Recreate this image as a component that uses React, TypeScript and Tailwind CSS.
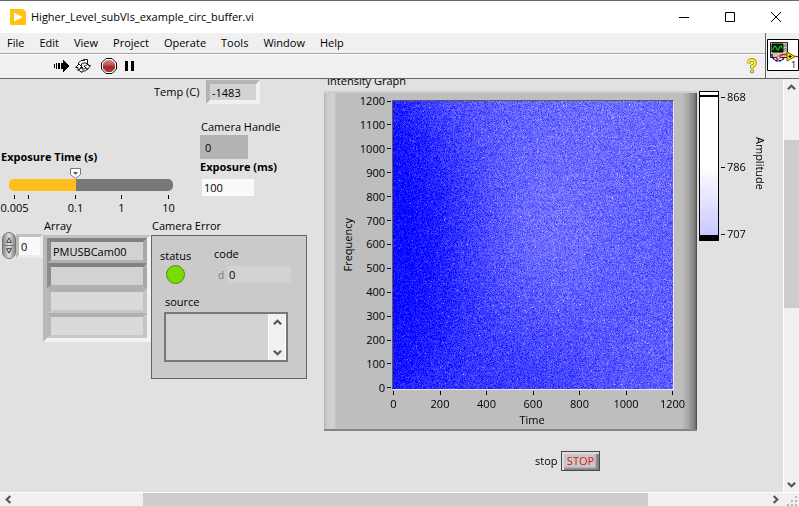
import { useEffect, useRef, useState } from "react";
import type { ReactNode } from "react";

const MENUS = ["File", "Edit", "View", "Project", "Operate", "Tools", "Window", "Help"];
const Y_TICKS = [1200, 1100, 1000, 900, 800, 700, 600, 500, 400, 300, 200, 100, 0];
const X_TICKS = [0, 200, 400, 600, 800, 1000, 1200];
const PLOT_W = 280;
const PLOT_H = 288;

// Mean brightness of the camera frame at a normalised position.
function level(u: number, v: number) {
  const edge = 0.06 + 0.18 * Math.sin(Math.PI * Math.pow(v, 0.9));
  const ramp = 1 / (1 + Math.exp(-(u - edge) * 9));
  const glow = Math.exp(-((u - 0.52) ** 2 / 0.06 + (v - 0.46) ** 2 / 0.08));
  const top = 0.05 * Math.exp(-((u - 0.8) ** 2 / 0.12 + v ** 2 / 0.1));
  const bottom = 0.13 * Math.exp(-((u - 0.4) ** 2 / 0.14 + (v - 1) ** 2 / 0.1));
  return 0.38 * ramp + 0.08 * glow + top - bottom - 0.01;
}

function IntensityPlot() {
  const ref = useRef<HTMLCanvasElement>(null);
  useEffect(() => {
    const ctx = ref.current?.getContext("2d");
    if (!ctx) return;
    const img = ctx.createImageData(PLOT_W, PLOT_H);
    let seed = 1483;
    const rand = () => {
      seed = (Math.imul(seed, 1664525) + 1013904223) >>> 0;
      return seed / 4294967296;
    };
    for (let y = 0; y < PLOT_H; y++) {
      const row = (rand() - 0.5) * 0.02;
      for (let x = 0; x < PLOT_W; x++) {
        const n = rand() + rand() + rand() - 1.5;
        const spike = rand() > 0.985 ? rand() * 0.35 : 0;
        const t = level(x / PLOT_W, y / PLOT_H) + row + n * 0.17 + spike;
        const c = Math.max(0, Math.min(1, t)) * 255;
        const i = (y * PLOT_W + x) * 4;
        img.data[i] = c;
        img.data[i + 1] = c;
        img.data[i + 2] = 255;
        img.data[i + 3] = 255;
      }
    }
    ctx.putImageData(img, 0, 0);
  }, []);
  return (
    <canvas
      ref={ref}
      width={PLOT_W}
      height={PLOT_H}
      role="img"
      aria-label="Intensity plot"
      className="block box-content h-[288px] w-[280px] border border-t-[#5a5a5a] border-l-[#5a5a5a] border-r-[#e6e6e6] border-b-[#e6e6e6]"
    />
  );
}

const CHEVRONS = {
  up: "M1 7 L5 3 L9 7",
  down: "M1 3 L5 7 L9 3",
  left: "M7 1 L3 5 L7 9",
  right: "M3 1 L7 5 L3 9",
};

function Arrow({ dir }: { dir: keyof typeof CHEVRONS }) {
  return (
    <button type="button" aria-label={`Scroll ${dir}`} className="flex size-4 shrink-0 items-center justify-center">
      <svg viewBox="0 0 10 10" className="size-[9px]" fill="none" stroke="#555" strokeWidth="2.4">
        <path d={CHEVRONS[dir]} />
      </svg>
    </button>
  );
}

function TitleBar() {
  return (
    <header className="flex h-[33px] shrink-0 items-center border-t border-[#6b6b6b] bg-white">
      <svg viewBox="0 0 16 16" className="ml-[10px] size-4">
        <path d="M0 0h13l3 3v13H0z" fill="#ffc20e" />
        <path d="M4 3.5v9l8.5-4.5z" fill="#fff" />
      </svg>
      <h1 className="ml-[5px] grow leading-4">Higher_Level_subVIs_example_circ_buffer.vi</h1>
      <div className="flex">
        <button type="button" aria-label="Minimize" className="flex h-8 w-[46px] items-center justify-center">
          <svg viewBox="0 0 10 10" className="size-[10px]" stroke="#000"><path d="M0 5.5h10" /></svg>
        </button>
        <button type="button" aria-label="Maximize" className="flex h-8 w-[46px] items-center justify-center">
          <svg viewBox="0 0 10 10" className="size-[10px]" stroke="#000" fill="none"><path d="M.5.5h9v9h-9z" /></svg>
        </button>
        <button type="button" aria-label="Close" className="flex h-8 w-[46px] items-center justify-center">
          <svg viewBox="0 0 10 10" className="size-[10px]" stroke="#000"><path d="M0 0l10 10M10 0L0 10" /></svg>
        </button>
      </div>
    </header>
  );
}

function ToolButton({ label, className = "", children }: { label: string; className?: string; children: ReactNode }) {
  return (
    <button type="button" aria-label={label} className={`flex h-4 w-4 items-center justify-center ${className}`}>
      {children}
    </button>
  );
}

function Toolbar() {
  return (
    <div className="flex h-6 items-center border-t border-white pb-px pl-[53px]">
      <ToolButton label="Run">
        <svg viewBox="0 0 16 14" className="h-[14px] w-4 shrink-0" fill="#000" shapeRendering="crispEdges">
          <path d="M1 5h1v4H1zM3 4h1v6H3zM5 4h1v6H5zM6 4h1v6H6zM8 4h1v6H8z" />
          <path d="M9 4h1V1h1v1h1v1h1v1h1v1h1v1h1v2h-1v1h-1v1h-1v1h-1v1h-1v1h-1v-3H9z" />
        </svg>
      </ToolButton>
      <ToolButton label="Run continuously" className="ml-[6px]">
        <svg viewBox="0 0 16 14" className="h-[14px] w-4 shrink-0" fill="#fff" stroke="#000" strokeWidth=".9" strokeLinejoin="round">
          <path d="M3.500 6.500V4L6 1.500H9.500L8.500.5H12.500V5L11 4H7.500L6.500 5V6.500z" />
          <path d="M12 5.500H13.500V6.500H15.500L12.500 10.500 9 7H10.500z" />
          <path d="M12.500 9.500L10.500 12H7V13.500L3.500 11 7 8.500V10H9.500L10.500 9z" />
          <path d="M3 11.500V8.500H.5L4 5 7.500 8.500H5.500L5 9.500z" />
        </svg>
      </ToolButton>
      <ToolButton label="Abort" className="ml-[10px]">
        <svg viewBox="0 0 16 16" className="size-4 shrink-0">
          <defs>
            <linearGradient id="abort" x2="0" y2="1">
              <stop offset="0" stopColor="#dc8a8a" />
              <stop offset=".45" stopColor="#c04a4a" />
              <stop offset=".55" stopColor="#a62626" />
              <stop offset="1" stopColor="#b03c3c" />
            </linearGradient>
          </defs>
          <path d="M5 .5h6L15.500 5v6L11 15.500H5L.5 11V5z" fill="#fff" stroke="#000" />
          <path d="M5.500 2h5l3.500 3.500v5l-3.500 3.500h-5L2 10.500v-5z" fill="url(#abort)" />
        </svg>
      </ToolButton>
      <ToolButton label="Pause" className="ml-1">
        <svg viewBox="0 0 9 10" className="h-[10px] w-[9px]"><path d="M0 0h3v10H0zM6 0h3v10H6z" /></svg>
      </ToolButton>
      <ToolButton label="Context help" className="mr-[5px] ml-auto">
        <svg viewBox="0 0 12 16" className="h-4 w-3 shrink-0" fill="none">
          <path d="M2.500 5.500Q2.500 2 5.800 2T9 5.200Q9 7 6 8.300V10.500" stroke="#555" strokeWidth="3.400" />
          <path d="M4.300 11.800h3.400v3.400H4.300z" fill="#555" />
          <path d="M2.200 5.500Q2.500 2 5.800 2T9 5.200Q9 7 6 8.300V10.300" stroke="#fff000" strokeWidth="2.400" />
          <path d="M4.800 12.300h2.400v2.400H4.800z" fill="#fff000" />
        </svg>
      </ToolButton>
    </div>
  );
}

function ViIcon() {
  return (
    <div className="flex w-[34px] shrink-0 flex-col border-l border-[#646464] pt-[6px] pl-px">
      <svg viewBox="0 0 32 32" className="size-8">
        <path d="M.5.5h31v31H.5z" fill="#fff" stroke="#000" />
        <path d="M3.500 3.500h17v15h-17z" fill="#d2caa4" stroke="#222" />
        <path d="M5 5h11v8H5z" fill="#001c00" stroke="#000" />
        <path d="M5.500 11l1.500-3 1-1 1 1 1.500 3 1 0 1.500-3.500 1-.5 1.500 2.500" stroke="#1fd12a" strokeWidth="1.100" fill="none" />
        <circle cx="18.500" cy="6.500" r="1" fill="#fff" stroke="#444" strokeWidth=".8" />
        <circle cx="18.500" cy="10.500" r="1" fill="#fff" stroke="#444" strokeWidth=".8" />
        <path d="M5 15v2q2 5 6 5t6-3" stroke="#10109a" strokeWidth="1.400" strokeDasharray="3 .6" fill="none" />
        <path d="M9 20h2l3-4 3-.5h5" stroke="#e0141c" strokeWidth="1.400" fill="none" />
        <circle cx="11.500" cy="18.500" r="1.500" fill="#fff" stroke="#e0141c" strokeWidth=".8" />
        <path d="M27 17.500h4" stroke="#e0141c" strokeWidth="1.300" />
        <path d="M20 13v9l8-4.500z" fill="#ffe500" stroke="#6b6000" />
        <path d="M21.500 17.500h3M23 16v3" stroke="#000" />
        <text x="24" y="29" fontSize="9" fontFamily="Open Sans, sans-serif">1</text>
      </svg>
    </div>
  );
}

function ExposureSlider() {
  const [value, setValue] = useState(41);
  return (
    <div className="w-[183px]">
      <label htmlFor="exposure-time" className="block pl-px font-bold">Exposure Time (s)</label>
      <div className="mt-[3px] ml-[9px] w-[164px]">
        <div style={{ paddingLeft: `${value}%` }}>
          <svg viewBox="0 0 11 11" className="-ml-[6px] h-[11px] w-[11px]" stroke="#777">
            <path d="M.5.5h10v6l-5 4-5-4z" fill="#fff" />
            <path d="M3 4h5l-2.500 3z" fill="#555" stroke="none" />
          </svg>
        </div>
        <input
          id="exposure-time"
          type="range"
          min={0}
          max={100}
          value={value}
          onChange={(e) => setValue(Number(e.target.value))}
          style={{ backgroundImage: `linear-gradient(to right, #ffbe1a ${value}%, #787878 ${value}%)` }}
          className="block h-3 w-full appearance-none rounded-[5px] [&::-webkit-slider-thumb]:size-3 [&::-webkit-slider-thumb]:appearance-none [&::-webkit-slider-thumb]:opacity-0"
        />
      </div>
      <div className="mt-1 ml-[14px] grid grid-cols-[14px_47px_46px_47px_0px]">
        {["0.005", "", "0.1", "1", "10"].map((t, i) => (
          <div key={i} className="flex w-px flex-col items-center">
            <span className="h-1 w-px bg-black" />
            <span className="mt-px">{t}</span>
          </div>
        ))}
      </div>
    </div>
  );
}

function ArrayRow({ value, active }: { value: string; active: boolean }) {
  const tone = active
    ? "bg-[#d2d2d2] border-t-[#828282] border-l-[#8c8c8c] border-r-[#a8a8a8] border-b-[#b0b0b0]"
    : "bg-[#dadada] border-t-[#b0b0b0] border-l-[#b8b8b8] border-r-[#c4c4c4] border-b-[#c8c8c8]";
  return (
    <input
      aria-label="Array element"
      readOnly
      value={value}
      className={`block h-[25px] w-full border-4 border-b-[3px] pl-[2px] ${tone}`}
    />
  );
}

function ArrayControl() {
  return (
    <div className="flex">
      <div className="flex pt-3">
        <div className="mt-[2px] ml-[2px] flex h-[27px] w-[14px] flex-col overflow-hidden rounded-full border border-[#777] bg-linear-to-r from-[#8a8a8a] via-[#e0e0e0] to-[#8a8a8a]">
          <button type="button" aria-label="Increment index" className="flex h-[13px] items-end justify-center border-b border-[#777] pb-[2px]">
            <svg viewBox="0 0 6 6" className="size-[6px]" fill="#ccc" stroke="#444"><path d="M3 .8L5.400 5.400H.6z" /></svg>
          </button>
          <button type="button" aria-label="Decrement index" className="flex h-3 items-start justify-center pt-[2px]">
            <svg viewBox="0 0 6 6" className="size-[6px]" fill="#ccc" stroke="#444"><path d="M3 5.200L5.400.6H.6z" /></svg>
          </button>
        </div>
        <input
          aria-label="Array index"
          defaultValue="0"
          className="mt-1 h-6 w-[27px] border-[3px] border-t-[#c0c0c0] border-r-[#ececec] border-b-[#ececec] border-l-[#bcbcbc] bg-[#fafafa] pl-[2px]"
        />
      </div>
      <div className="w-[108px]">
        <div className="pl-px">Array</div>
        <div className="mt-px border-4 border-t-[3px] border-t-[#c0c0c0] border-r-[#f2f2f2] border-b-[#f2f2f2] border-l-[#b8b8b8]">
          <ArrayRow value="PMUSBCam00" active />
          <ArrayRow value="" active />
          <ArrayRow value="" active={false} />
          <ArrayRow value="" active={false} />
        </div>
      </div>
    </div>
  );
}

function ErrorCluster() {
  return (
    <section className="w-[156px]">
      <h2 className="pl-px">Camera Error</h2>
      <div className="mt-px h-[144px] border border-[#646464] bg-[#cacaca] px-3 pt-[10px]">
        <div className="flex">
          <div className="w-[54px] pt-[2px]">
            <div className="-ml-1">status</div>
            <div role="img" aria-label="No error" className="mt-px ml-[2px] size-[19px] rounded-full border border-[#5a8a10] bg-[#77dc00]" />
          </div>
          <div>
            <label htmlFor="code" className="-ml-1 block">code</label>
            <div className="mt-1 flex items-center">
              <span className="w-[9px] text-[10px] text-[#777]">d</span>
              <input id="code" readOnly value="0" className="h-[17px] w-[64px] bg-[#d2d2d2] pl-[2px]" />
            </div>
          </div>
        </div>
        <label htmlFor="source" className="mt-[10px] block pl-px">source</label>
        <div className="mt-[2px] flex h-[50px] w-[124px] border-2 border-[#777] bg-[#d2d2d2]">
          <textarea id="source" readOnly className="w-[102px] resize-none" />
          <div className="flex grow flex-col items-center justify-between border-x border-x-white bg-[#f0f0f0]">
            <Arrow dir="up" />
            <Arrow dir="down" />
          </div>
        </div>
      </div>
    </section>
  );
}

function LeftColumn() {
  return (
    <div className="w-[324px] shrink-0">
      <div className="flex pl-[154px]">
        <label htmlFor="temp" className="w-[52px] pt-[5px]">Temp (C)</label>
        <input
          id="temp"
          readOnly
          value="-1483"
          className="mt-px h-6 w-[54px] border-4 border-t-[#b4b4b4] border-r-[#f0f0f0] border-b-[#f0f0f0] border-l-[#b4b4b4] bg-[#d2d2d2] pl-[2px]"
        />
      </div>
      <div className="flex pt-[15px]">
        <div className="w-[200px] pt-[30px]">
          <ExposureSlider />
        </div>
        <div>
          <label htmlFor="handle" className="block pl-px">Camera Handle</label>
          <input id="handle" readOnly value="0" className="block h-6 w-12 bg-[#b3b3b3] pl-[5px]" />
          <label htmlFor="exposure-ms" className="block font-bold">Exposure (ms)</label>
          <input id="exposure-ms" defaultValue="100" className="mt-1 ml-[2px] block h-[17px] w-[52px] bg-[#fafafa] pl-[2px]" />
        </div>
      </div>
      <div className="flex pt-[2px]">
        <ArrayControl />
        <ErrorCluster />
      </div>
    </div>
  );
}

function IntensityGraph() {
  return (
    <figure className="w-[373px] shrink-0">
      <figcaption className="-mt-[6px] pl-[3px]">Intensity Graph</figcaption>
      <div className="mt-[2px] h-[340px] border-t-2 border-b-2 border-t-[#cfcfcf] border-b-[#858585] bg-[linear-gradient(to_right,#b0b0b0_0,#cacaca_2px,#d4d4d4_9px,#bebebe_13px,#bebebe_358px,#a8a8a8_364px,#7a7a7a_371px,#404040_373px)] pt-[7px]">
        <div className="flex">
          <div className="flex w-8 items-center justify-end">
            <span className="rotate-180 [writing-mode:vertical-rl]">Frequency</span>
          </div>
          <div className="flex w-9 flex-col items-end justify-between pt-px pr-px pb-[2px]">
            {Y_TICKS.map((t) => (
              <div key={t} className="flex h-0 items-center gap-[2px]">
                <span>{t}</span>
                <span className="h-px w-1 bg-black" />
              </div>
            ))}
          </div>
          <IntensityPlot />
        </div>
        <div className="mt-px ml-[69px] flex w-[280px] justify-between">
          {X_TICKS.map((t) => (
            <div key={t} className="flex w-px flex-col items-center">
              <span className="h-1 w-px bg-black" />
              <span className="mt-px">{t}</span>
            </div>
          ))}
        </div>
        <div className="ml-[68px] w-[280px] text-center">Time</div>
      </div>
      <div className="mt-5 flex items-center pl-[211px]">
        <label htmlFor="stop" className="w-[26px]">stop</label>
        <button
          id="stop"
          type="button"
          className="h-5 w-[39px] border border-[#4a4a4a] bg-[#c8c8c8] text-center leading-4 text-[#f01010] shadow-[inset_2px_2px_0_#dcdcdc,inset_-3px_-2px_2px_#808080]"
        >
          STOP
        </button>
      </div>
    </figure>
  );
}

function ScaleMark({ value }: { value: number }) {
  return (
    <div className="flex h-0 items-center gap-[2px]">
      <span className="h-px w-1 bg-black" />
      <span>{value}</span>
    </div>
  );
}

function ColorRamp() {
  return (
    <div className="flex shrink-0 pt-3 pl-[2px]">
      <div className="h-[150px] w-5 border border-black bg-[linear-gradient(to_bottom,#fff_0_3px,#000_3px_5px,#fff_5px_74px,#c8c8ff_143px,#000_143px)]" />
      <div className="flex flex-col pt-[6px] pl-[2px]">
        <ScaleMark value={868} />
        <div className="h-[70px]" />
        <ScaleMark value={786} />
        <div className="h-[67px]" />
        <ScaleMark value={707} />
      </div>
      <span className="mt-[46px] ml-[6px] [writing-mode:vertical-rl]">Amplitude</span>
    </div>
  );
}

export default function App() {
  return (
    <div className="flex h-screen flex-col overflow-hidden bg-[#f0f0f0] font-['Open_Sans','Noto_Sans',sans-serif] text-[11px] leading-4 text-black">
      <TitleBar />
      <div className="flex h-[46px] shrink-0 border-b border-[#646464]">
        <div className="min-w-0 grow">
          <nav className="flex h-[21px] items-center gap-[15px] border-b border-[#a0a0a0] pb-px pl-[7px]">
            {MENUS.map((m) => (
              <button key={m} type="button">{m}</button>
            ))}
          </nav>
          <Toolbar />
        </div>
        <ViIcon />
      </div>
      <div className="flex min-h-0 grow">
        <main className="flex min-w-0 grow items-start overflow-hidden bg-[#e1e1e1]">
          <LeftColumn />
          <IntensityGraph />
          <ColorRamp />
        </main>
        <div className="flex w-4 shrink-0 flex-col items-center border-l border-white">
          <Arrow dir="up" />
          <div className="flex w-full grow flex-col pt-[45px] pb-[168px]">
            <div className="w-full grow bg-[#cdcdcd]" />
          </div>
          <Arrow dir="down" />
        </div>
      </div>
      <div className="flex h-[14px] shrink-0 items-center border-t border-white">
        <Arrow dir="left" />
        <div className="flex h-full grow pr-[119px] pl-[127px]">
          <div className="h-full grow bg-[#cdcdcd]" />
        </div>
        <Arrow dir="right" />
        <svg viewBox="0 0 16 14" className="h-[14px] w-4 shrink-0" fill="#b8b8b8">
          <path d="M12 3h2v2h-2zM12 7h2v2h-2zM8 7h2v2H8zM12 11h2v2h-2zM8 11h2v2H8zM4 11h2v2H4z" />
        </svg>
      </div>
    </div>
  );
}
